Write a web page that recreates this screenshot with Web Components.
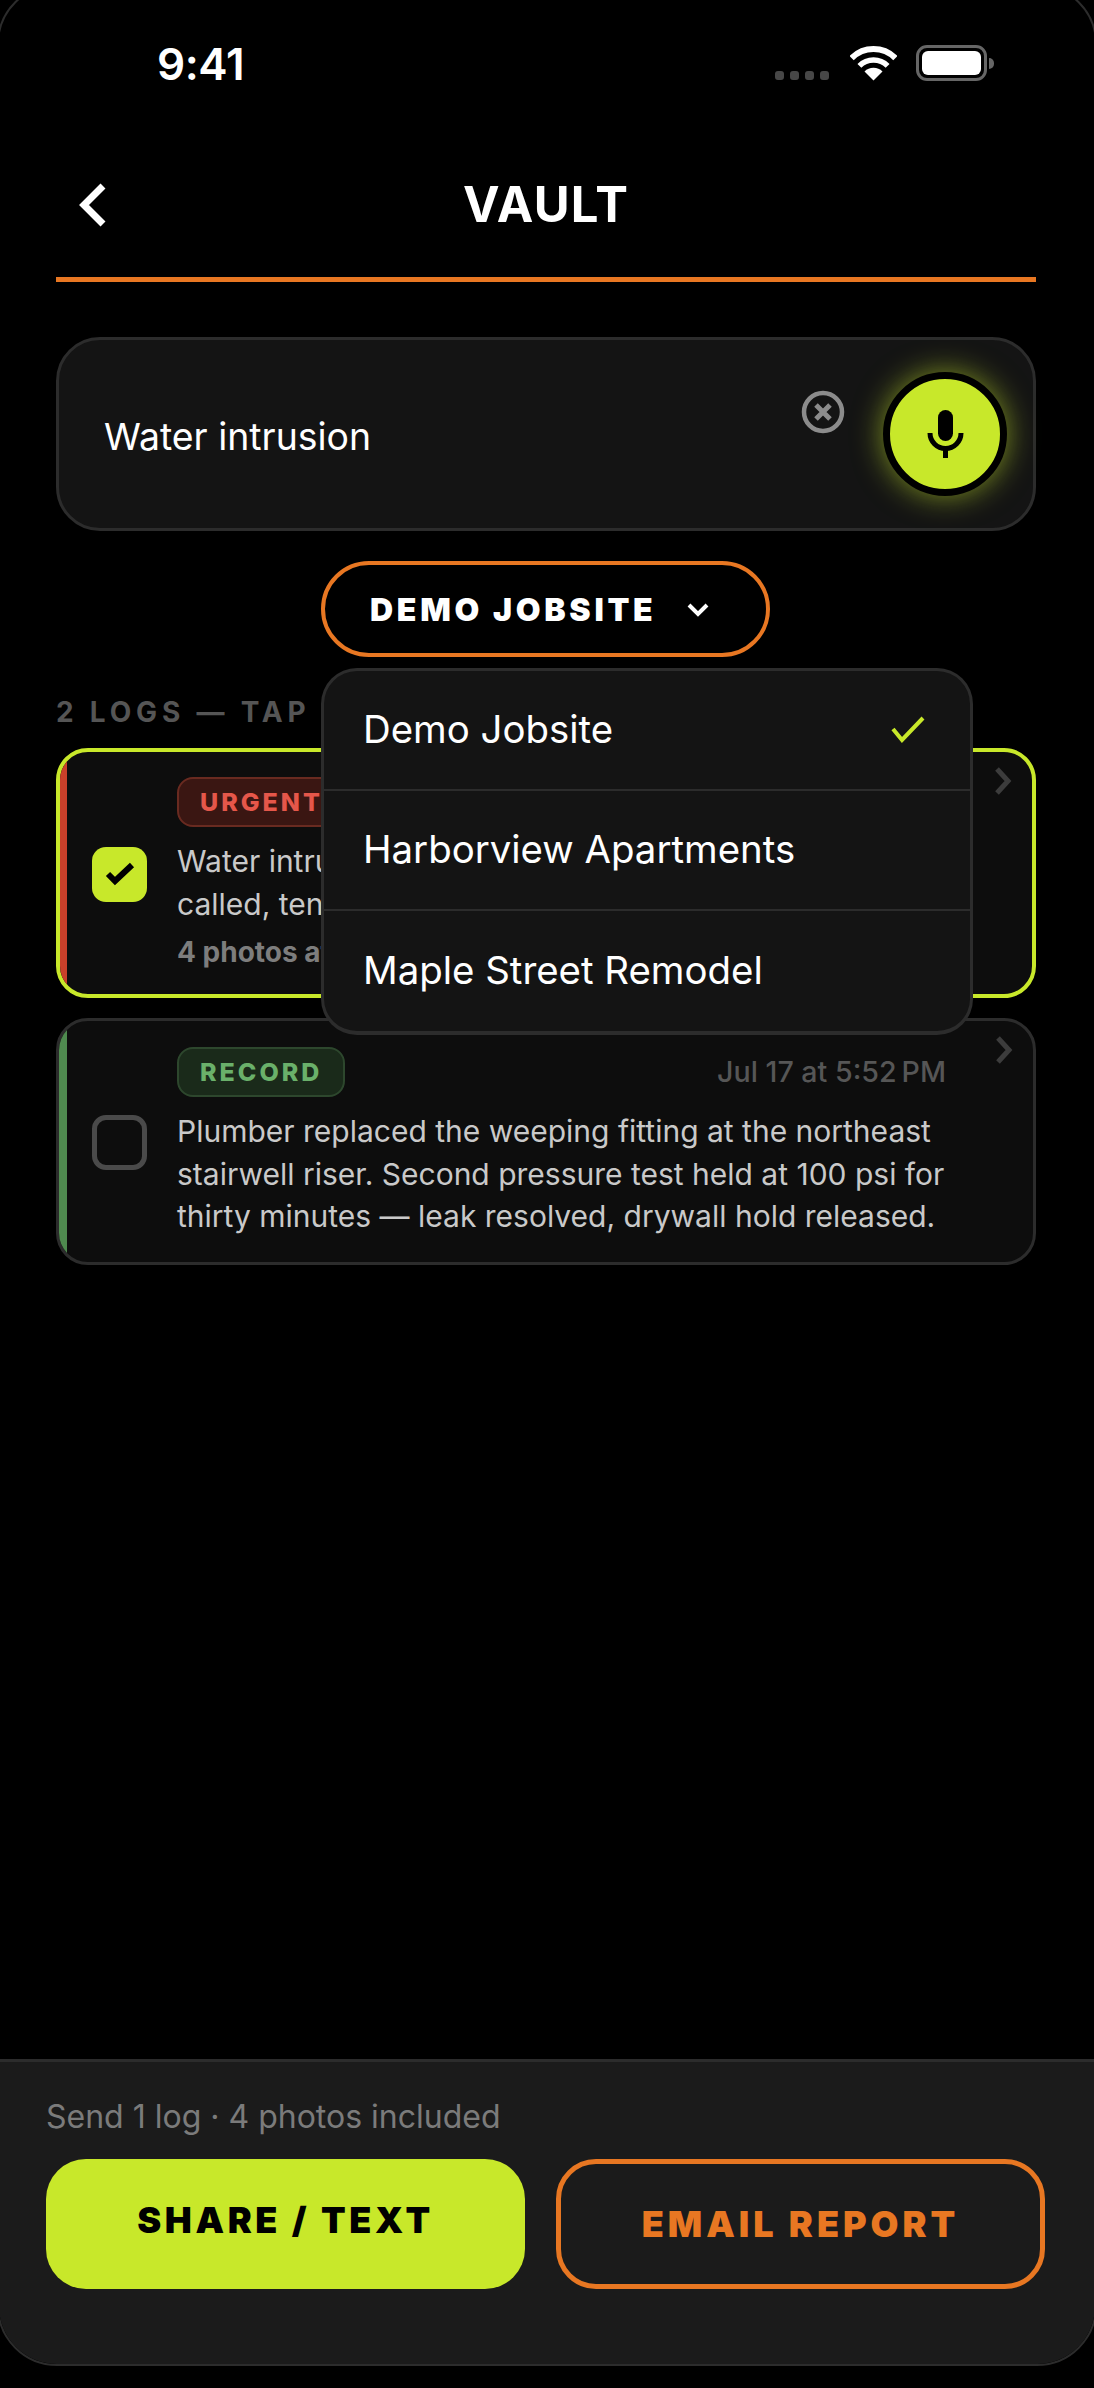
<!DOCTYPE html>
<html lang="en">
<head>
<meta charset="utf-8">
<title>Vault</title>
<style>
  html, body { margin: 0; height: 2388px; background: #000; overflow: hidden; }
  body { font-family: Inter, "Liberation Sans", sans-serif; color: #fff; }
</style>
</head>
<body>
<vault-screen>
  <status-bar slot="top"></status-bar>
  <vault-header slot="top" title="VAULT"></vault-header>

  <search-field value="Water intrusion"></search-field>
  <site-picker selected="Demo Jobsite"></site-picker>
  <log-list>
    <log-card kind="urgent" label="URGENT" checked meta="4 photos attached">Water intrusion at northeast stairwell. Plumber<br>called, tenant notified, drywall on hold.</log-card>
    <log-card kind="record" label="RECORD" date="Jul 17 at 5:52&#8239;PM">Plumber replaced the weeping fitting at the northeast stairwell riser. Second pressure test held at 100 psi for thirty minutes — leak resolved, drywall hold released.</log-card>
  </log-list>

  <action-footer slot="bottom" summary="Send 1 log · 4 photos included"></action-footer>
</vault-screen>

<script>
class VaultScreen extends HTMLElement {
  constructor() {
    super();
    this.attachShadow({ mode: "open" });
  }

  connectedCallback() {
    this.shadowRoot.innerHTML = /* html */`
    <style>
      :host {
        display: flex;
        flex-direction: column;
        box-sizing: border-box;
        width: 1100px;
        height: 2382px;
        margin: -16px 0 0 -3px;
        border: 2px solid #2c2c2c;
        border-radius: 60px;
        overflow: hidden;
        background: #000;
      }
      .main {
        flex: 1;
        display: flex;
        flex-direction: column;
        padding: 0 59px 0 57px;
      }
    </style>
    <slot name="top"></slot>
    <div class="main"><slot></slot></div>
    <slot name="bottom"></slot>`;
  }
}

class StatusBar extends HTMLElement {
  constructor() {
    super();
    this.attachShadow({ mode: "open" });
  }

  connectedCallback() {
    this.shadowRoot.innerHTML = /* html */`
    <style>
      :host {
        display: flex;
        align-items: flex-start;
        box-sizing: border-box;
        height: 114px;
        padding: 56px 0 0 158px;
      }
      .time {
        font: 600 44px/44px Inter, "Liberation Sans", sans-serif;
        color: #fff;
        letter-spacing: -0.4px;
      }
      .icons {
        margin-left: auto;
        margin-right: 101px;
        display: flex;
        align-items: flex-start;
        padding-top: 3px;
      }
      .dots { display: flex; gap: 6px; margin-top: 26px; margin-right: 21px; }
      .dots i { width: 9px; height: 9px; border-radius: 3px; background: #474747; }
      .battery { display: flex; align-items: center; margin-left: 19px; }
      .shell {
        box-sizing: border-box;
        width: 71px;
        height: 36px;
        padding: 3px;
        border: 3px solid #666;
        border-radius: 11px;
      }
      .cell { height: 100%; border-radius: 6px; background: #fff; }
      .nub { width: 5px; height: 11px; margin-left: 2px; border-radius: 0 5px 5px 0; background: #666; }
      svg { display: block; }
    </style>
    <span class="time">9:41</span>
    <div class="icons">
      <div class="dots"><i></i><i></i><i></i><i></i></div>
      <svg width="47" height="36" viewBox="0 0 47 36" fill="none" stroke="#fff">
        <path d="M1.6 13.1A31 31 0 0 1 45.4 13.1" stroke-width="6"/>
        <path d="M9.4 20.9A20 20 0 0 1 37.6 20.9" stroke-width="5.5"/>
        <path d="M23.5 35.5L14.5 26.5A12.7 12.7 0 0 1 32.5 26.5Z" fill="#fff" stroke="none"/>
      </svg>
      <div class="battery">
        <div class="shell"><div class="cell"></div></div>
        <div class="nub"></div>
      </div>
    </div>`;
  }
}

class VaultHeader extends HTMLElement {
  constructor() {
    super();
    this.attachShadow({ mode: "open" });
  }

  connectedCallback() {
    this.shadowRoot.innerHTML = /* html */`
    <style>
      :host {
        display: block;
        margin: 0 59px 0 57px;
        height: 182px;
        box-sizing: border-box;
        border-bottom: 5px solid #e87722;
        position: relative;
      }
      .row {
        display: flex;
        align-items: center;
        justify-content: center;
        height: 177px;
        padding-top: 33px;
        box-sizing: border-box;
      }
      h1 {
        margin: 0;
        font: 700 49px/56px Inter, "Liberation Sans", sans-serif;
        letter-spacing: 1.2px;
        color: #fff;
      }
      /* back chevron sits over the title row so the title stays centred */
      svg { position: absolute; left: 22px; top: 82px; }
    </style>
    <svg width="30" height="46" viewBox="0 0 30 46" fill="none" stroke="#fff" stroke-width="7">
      <path d="M25 4L6 23L25 42"/>
    </svg>
    <div class="row"><h1>${this.getAttribute("title")}</h1></div>`;
  }
}

class SearchField extends HTMLElement {
  constructor() {
    super();
    this.attachShadow({ mode: "open" });
  }

  connectedCallback() {
    this.shadowRoot.innerHTML = /* html */`
    <style>
      :host {
        display: flex;
        align-items: center;
        box-sizing: border-box;
        height: 194px;
        margin-top: 55px;
        padding: 0 26px 0 45px;
        background: #141414;
        border: 3px solid #2c2c2c;
        border-radius: 44px;
      }
      .value {
        flex: 1;
        padding-top: 6px;
        font: 400 37.4px/44px Inter, "Liberation Sans", sans-serif;
        color: #fff;
      }
      .clear { display: block; margin: 0 38px 44px 0; }
      .mic {
        box-sizing: border-box;
        width: 124px;
        height: 124px;
        display: flex;
        align-items: center;
        justify-content: center;
        background: #c8e82a;
        border: 7px solid #000;
        border-radius: 50%;
        box-shadow: 0 0 30px rgba(200, 232, 42, 0.6);
      }
    </style>
    <div class="value">${this.getAttribute("value")}</div>
    <svg class="clear" width="44" height="44" viewBox="0 0 44 44" fill="none" stroke="#8c8c8c">
      <circle cx="22" cy="22" r="19" stroke-width="4.5"/>
      <path d="M15 15L29 29M29 15L15 29" stroke-width="5"/>
    </svg>
    <div class="mic">
      <svg width="41" height="50" viewBox="0 0 41 50" fill="none" stroke="#000">
        <rect x="13" y="1" width="15" height="31" rx="7.5" fill="#000" stroke="none"/>
        <path d="M5 24A15.5 15.5 0 0 0 36 24" stroke-width="5"/>
        <path d="M20.5 39V49" stroke-width="5"/>
      </svg>
    </div>`;
  }
}

class SitePicker extends HTMLElement {
  constructor() {
    super();
    this.attachShadow({ mode: "open" });
  }

  connectedCallback() {
    const sites = ["Demo Jobsite", "Harborview Apartments", "Maple Street Remodel"];
    const selected = this.getAttribute("selected");
    const rows = sites.map((s) => /* html */`
      <div class="item"><span>${s}</span>${s === selected ? `
        <svg width="34" height="28" viewBox="0 0 34 28" fill="none" stroke="#c8e82a" stroke-width="4">
          <path d="M2 14L11 25L32 3"/>
        </svg>` : ""}</div>`).join("");

    this.shadowRoot.innerHTML = /* html */`
    <style>
      :host {
        display: block;
        position: relative;
        width: 652px;
        margin: 30px 0 0 265px;
        z-index: 2;
      }
      .trigger {
        box-sizing: border-box;
        display: inline-flex;
        align-items: center;
        width: 449px;
        height: 96px;
        padding: 2px 0 0 45px;
        border: 4px solid #e87722;
        border-radius: 48px;
        background: #000;
        font: 900 32px/40px Inter, "Liberation Sans", sans-serif;
        letter-spacing: 3.7px;
        color: #fff;
      }
      .trigger svg { margin-left: 30px; }
      .menu {
        position: absolute;
        left: 0;
        top: 107px;
        width: 100%;
        box-sizing: border-box;
        background: #141414;
        border: 3px solid #2c2c2c;
        border-bottom-width: 4px;
        border-radius: 36px;
      }
      .item {
        box-sizing: border-box;
        display: flex;
        align-items: center;
        justify-content: space-between;
        height: 120px;
        padding: 0 45px 2px 39px;
        font: 400 38.4px/44px Inter, "Liberation Sans", sans-serif;
        color: #fff;
        border-bottom: 2px solid #2c2c2c;
      }
      .item:last-child { border-bottom: 0; }
    </style>
    <div class="trigger">
      <span>${selected.toUpperCase()}</span>
      <svg width="24" height="16" viewBox="0 0 24 16" fill="none" stroke="#fff" stroke-width="4">
        <path d="M3 3L12 12L21 3"/>
      </svg>
    </div>
    <div class="menu">${rows}</div>`;
  }
}

class LogList extends HTMLElement {
  constructor() {
    super();
    this.attachShadow({ mode: "open" });
  }

  connectedCallback() {
    this.shadowRoot.innerHTML = /* html */`
    <style>
      :host { display: block; }
      .label {
        margin: 38px 0 19px;
        font: 700 28px/34px Inter, "Liberation Sans", sans-serif;
        letter-spacing: 4.8px;
        color: #555;
      }
      .cards { display: flex; flex-direction: column; gap: 20px; }
    </style>
    <div class="label">2 LOGS — TAP TO SELECT</div>
    <div class="cards"><slot></slot></div>`;
  }
}

class LogCard extends HTMLElement {
  constructor() {
    super();
    this.attachShadow({ mode: "open" });
  }

  connectedCallback() {
    const checked = this.hasAttribute("checked");
    const meta = this.getAttribute("meta");
    const date = this.getAttribute("date");
    this.shadowRoot.innerHTML = /* html */`
    <style>
      :host {
        display: flex;
        align-items: center;
        position: relative;
        box-sizing: border-box;
        border: 3px solid #2c2c2c;
        border-radius: 32px;
        background: #0d0d0d;
        overflow: hidden;
        --bar: #4f8a4f;
        --tag: #6ab06a;
        --tag-bg: #1a2a1a;
        --tag-line: #2d472d;
      }
      :host([kind="urgent"]) {
        --bar: #c9402a;
        --tag: #e5574a;
        --tag-bg: #3a1612;
        --tag-line: #692a20;
      }
      :host([checked]) { border: 4px solid #c8e82a; }
      .bar { align-self: stretch; width: 8px; flex: none; background: var(--bar); }
      :host([checked]) .bar { width: 7px; }
      .box {
        box-sizing: border-box;
        flex: none;
        width: 55px;
        height: 55px;
        margin: 0 30px 0 25px;
        position: relative;
        top: 1px;
        display: flex;
        align-items: center;
        justify-content: center;
        border: 5px solid #4a4a4a;
        border-radius: 14px;
      }
      :host([checked]) .box { background: #c8e82a; border: 0; }
      .body { flex: 1; min-width: 0; padding: 26px 87px 24px 0; }
      :host([checked]) .body { padding: 25px 86px 25px 0; }
      .head { display: flex; align-items: center; justify-content: space-between; margin-bottom: 13px; }
      .tag {
        box-sizing: border-box;
        height: 50px;
        padding: 0 21px;
        display: flex;
        align-items: center;
        background: var(--tag-bg);
        border: 2.5px solid var(--tag-line);
        border-radius: 16px;
        font: 800 25px/30px Inter, "Liberation Sans", sans-serif;
        letter-spacing: 3px;
        color: var(--tag);
      }
      .date { font: 500 28.6px/32px Inter, "Liberation Sans", sans-serif; color: #565656; }
      .text {
        font: 400 30px/42.5px Inter, "Liberation Sans", sans-serif;
        color: #c9c9c9;
      }
      .meta {
        margin-top: 10px;
        font: 700 28px/34px Inter, "Liberation Sans", sans-serif;
        color: #7d7d7d;
      }
      /* chevron hangs in the card's top right corner */
      .more { position: absolute; right: 19px; top: 14px; }
    </style>
    <div class="bar"></div>
    <div class="box">${checked ? `
      <svg width="30" height="26" viewBox="0 0 30 26" fill="none" stroke="#000" stroke-width="6">
        <path d="M3 13L10 20L27 4"/>
      </svg>` : ""}</div>
    <div class="body">
      <div class="head">
        <span class="tag">${this.getAttribute("label")}</span>
        ${date ? `<span class="date">${date}</span>` : ""}
      </div>
      <div class="text"><slot></slot></div>
      ${meta ? `<div class="meta">${meta}</div>` : ""}
    </div>
    <svg class="more" width="20" height="30" viewBox="0 0 20 30" fill="none" stroke="#3c3c3c" stroke-width="5">
      <path d="M4 3L15 15L4 27"/>
    </svg>`;
  }
}

class ActionFooter extends HTMLElement {
  constructor() {
    super();
    this.attachShadow({ mode: "open" });
  }

  connectedCallback() {
    this.shadowRoot.innerHTML = /* html */`
    <style>
      :host {
        display: block;
        box-sizing: border-box;
        height: 305px;
        padding: 37px 50px 0 47px;
        background: #1b1b1b;
        border-top: 3px solid #2c2c2c;
      }
      .summary {
        font: 400 32px/36px Inter, "Liberation Sans", sans-serif;
        color: #7b7b7b;
      }
      .actions {
        display: flex;
        gap: 31px;
        margin-top: 24px;
      }
      .btn {
        box-sizing: border-box;
        height: 130px;
        display: flex;
        align-items: center;
        justify-content: center;
        border-radius: 40px;
        font: 900 36px/44px Inter, "Liberation Sans", sans-serif;
      }
      .share {
        width: 479px;
        padding-bottom: 8px;
        background: #c8e82a;
        letter-spacing: 3.6px;
        color: #000;
      }
      .email {
        flex: 1;
        border: 5px solid #e87722;
        letter-spacing: 4px;
        color: #e87722;
      }
    </style>
    <div class="summary">${this.getAttribute("summary")}</div>
    <div class="actions">
      <div class="btn share">SHARE / TEXT</div>
      <div class="btn email">EMAIL REPORT</div>
    </div>`;
  }
}

customElements.define("vault-screen", VaultScreen);
customElements.define("status-bar", StatusBar);
customElements.define("vault-header", VaultHeader);
customElements.define("search-field", SearchField);
customElements.define("site-picker", SitePicker);
customElements.define("log-list", LogList);
customElements.define("log-card", LogCard);
customElements.define("action-footer", ActionFooter);
</script>
</body>
</html>
